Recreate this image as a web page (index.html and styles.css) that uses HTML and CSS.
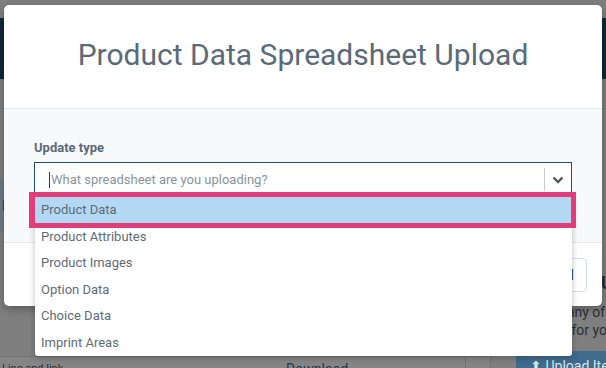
FILE: index.html
```html
<!DOCTYPE html>
<html lang="en">
<head>
    <meta charset="UTF-8">
    <title>Product Data Spreadsheet Upload</title>
    <link rel="stylesheet" href="styles.css">
</head>
<body>

<div class="topbar"></div>

<div class="main">
    <div class="leftcol">
        <div class="tabs">Export</div>
        <div class="tablehead">
            <span class="cell first">Line and link</span>
            <span class="cell dl">Download</span>
            <span class="cell narrow"></span>
        </div>
    </div>
    <div class="rightcol">
        <div class="sidetitle">Upload</div>
        <p class="sidetext">Choose any of Data<br>Formats for your</p>
        <a class="uploadbtn" href="javascript:void(0)">&#11014; Upload Items</a>
    </div>
</div>

<div class="modal">
    <div class="modalheader">
        <h1>Product Data Spreadsheet Upload</h1>
    </div>
    <div class="modalbody">
        <div class="label">Update type</div>
        <div class="select">
            <span class="caret"></span>
            <span class="placeholder">What spreadsheet are you uploading?</span>
            <span class="indicator">
                <svg width="12" height="8" viewBox="0 0 12 8"><path d="M1.5 1.5 L6 6 L10.5 1.5" fill="none" stroke="#555" stroke-width="2.4"/></svg>
            </span>

            <ul class="menu">
                <li class="active">Product Data</li>
                <li>Product Attributes</li>
                <li>Product Images</li>
                <li>Option Data</li>
                <li>Choice Data</li>
                <li>Imprint Areas</li>
            </ul>
            <div class="mark"></div>
        </div>
    </div>
    <div class="modalfooter">
        <a class="btn" href="javascript:void(0)">Cancel</a>
    </div>
</div>

</body>
</html>
```

FILE: styles.css
```css
*{
    margin:0;
    padding:0;
    box-sizing: border-box;
}

body{
    width: 606px;
    height: 368px;
    overflow: hidden;
    background-color: #7f7f7f;
    font-family: Roboto, "Liberation Sans", sans-serif;
}

/* dimmed page behind the dialog */
.topbar{
    margin-top: 18px;
    height: 61px;
    background-color: #10283c;
}

.main{
    display: grid;
    grid-template-columns: 491px 1fr;
}

.tabs{
    margin-top: 101px;
    height: 52px;
    line-height: 52px;
    padding-left: 2px;
    background-color: #6f7d88;
    color: #27394a;
    font-size: 14px;
}

.tablehead{
    display: flex;
    margin-top: 124px;
    height: 20px;
    border-top: 1px solid #747474;
    background-color: #858585;
    color: #23384b;
    font-size: 14px;
    line-height: 24px;
}

.cell{
    display: inline-block;
    height: 20px;
}
.first{
    width: 286px;
    padding-left: 2px;
    color: #2f2f2f;
    font-size: 11px;
}
.dl{
    width: 180px;
    border-right: 1px solid #737373;
}
.narrow{
    width: 25px;
    border-right: 1px solid #737373;
}

.rightcol{
    padding-left: 25px;
}

.sidetitle{
    margin-top: 193px;
    height: 18px;
    font-size: 18px;
    font-weight: bold;
    color: #1f2a33;
    text-indent: 85px;
}

.sidetext{
    margin-top: 13px;
    font-size: 14px;
    line-height: 18px;
    color: #2a2f33;
    white-space: nowrap;
}

.uploadbtn{
    display: block;
    margin-top: 12px;
    height: 30px;
    padding-left: 14px;
    line-height: 30px;
    background-color: #3f6c8c;
    color: #d9e3ea;
    font-size: 14px;
    text-decoration: none;
    white-space: nowrap;
}

/* dialog */
.modal{
    position: absolute;
    top: 5px;
    left: 4px;
    width: 598px;
    background-color: #fff;
    border-radius: 5px;
    box-shadow: 0 3px 10px rgba(0,0,0,0.3);
}

.modalheader{
    height: 104px;
    padding-bottom: 4px;
    border-bottom: 1px solid #dde9f2;
    display: flex;
    align-items: center;
    justify-content: center;
}

.modalheader h1{
    font-size: 30px;
    font-weight: normal;
    color: #5b6a79;
}

.modalbody{
    height: 133px;
    padding: 31px 30px 0;
    background-color: #f7f9fb;
}

.label{
    font-size: 13px;
    line-height: 15px;
    font-weight: bold;
    color: #5b6a79;
    margin-bottom: 7px;
}

.select{
    position: relative;
    display: flex;
    align-items: center;
    height: 35px;
    padding-left: 14px;
    border: 1px solid #1f4e79;
    background-color: #fff;
}

.caret{
    display: inline-block;
    width: 1px;
    height: 16px;
    margin-right: 1px;
    background-color: #333;
}

.placeholder{
    font-size: 13px;
    color: #8a949e;
}

.indicator{
    margin-left: auto;
    display: flex;
    align-items: center;
    justify-content: center;
    width: 27px;
    height: 23px;
    border-left: 1px solid #cccccc;
}

.menu{
    position: absolute;
    top: calc(100% + 1px);
    left: 0;
    right: -1px;
    list-style: none;
    background-color: #fff;
    border-radius: 0 0 3px 3px;
    box-shadow: 0 2px 6px rgba(0,0,0,0.25);
}

.menu li{
    height: 26.5px;
    line-height: 26.5px;
    padding-left: 6px;
    font-size: 13px;
    color: #5e6b78;
}

.menu li.active{
    background-color: #b3d8f4;
}

/* highlight frame around the first option */
.mark{
    position: absolute;
    top: 29px;
    left: -6px;
    width: 547px;
    height: 36px;
    border: 5px solid #e23c7b;
    border-left-width: 6px;
}

.modalfooter{
    height: 64px;
    padding: 15px;
    border-top: 1px solid #e3ebf1;
    display: flex;
    justify-content: flex-end;
}

.btn{
    display: inline-block;
    height: 34px;
    line-height: 32px;
    padding: 0 12px;
    border: 1px solid #d3dee7;
    border-radius: 4px;
    color: #2a3f52;
    font-size: 14px;
    text-decoration: none;
}
```
